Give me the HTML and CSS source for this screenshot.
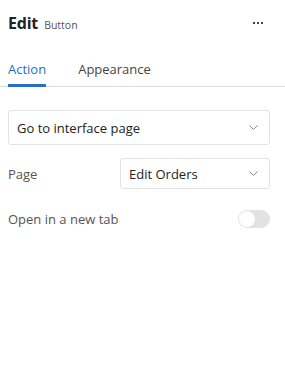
FILE: index.html
```html
<!DOCTYPE html>
<html>
<head>
<meta charset="utf-8">
<link rel="stylesheet" href="styles.css">
</head>
<body>
<div class="panel">
  <header class="head">
    <div class="title"><span class="t-main">Edit</span><span class="t-sub">Button</span></div>
    <button class="more" aria-label="More">
      <svg width="10" height="3" viewBox="0 0 10 3"><rect x="0" y="0" width="2" height="2" fill="#444"/><rect x="4" y="0" width="2" height="2" fill="#444"/><rect x="8" y="0" width="2" height="2" fill="#444"/></svg>
    </button>
  </header>
  <nav class="tabs">
    <div class="tab active">Action</div>
    <div class="tab">Appearance</div>
  </nav>
  <div class="body">
    <div class="select wide">
      <span>Go to interface page</span>
      <svg class="chev" width="9" height="5" viewBox="0 0 9 5"><path d="M0.5 0.5 L4.5 4.5 L8.5 0.5" fill="none" stroke="#888" stroke-width="1"/></svg>
    </div>
    <div class="row">
      <label class="lbl">Page</label>
      <div class="select narrow">
        <span>Edit Orders</span>
        <svg class="chev" width="9" height="5" viewBox="0 0 9 5"><path d="M0.5 0.5 L4.5 4.5 L8.5 0.5" fill="none" stroke="#888" stroke-width="1"/></svg>
      </div>
    </div>
    <div class="row toggle-row">
      <label class="lbl">Open in a new tab</label>
      <div class="toggle"><div class="knob"></div></div>
    </div>
  </div>
</div>
</body>
</html>
```
FILE: styles.css
```css
html, body {
  margin: 0;
  padding: 0;
  background: #fff;
}
body {
  font-family: "Open Sans", "Noto Sans", sans-serif;
  color: #333;
  width: 285px;
}
.head {
  display: flex;
  align-items: center;
  justify-content: space-between;
  padding: 11px 22px 0 8px;
  height: 24px;
}
.title {
  display: flex;
  align-items: baseline;
  gap: 6px;
}
.t-main {
  font-size: 16px;
  font-weight: 700;
  color: #222;
  letter-spacing: -0.2px;
}
.t-sub {
  font-size: 10.5px;
  color: #555;
}
.more {
  border: 0;
  background: none;
  padding: 0;
  display: flex;
  align-items: center;
}
.tabs {
  display: flex;
  gap: 32px;
  margin-top: 25px;
  padding-left: 8px;
  border-bottom: 1px solid #ddd;
}
.tab {
  font-size: 13px;
  color: #444;
  padding-bottom: 6px;
  border-bottom: 3px solid transparent;
  margin-bottom: -1px;
}
.tab.active {
  color: #1f6fc5;
  border-bottom-color: #2a6fc6;
}
.body {
  padding: 23px 15px 0 8px;
  display: flex;
  flex-direction: column;
}
.select {
  display: flex;
  align-items: center;
  justify-content: space-between;
  border: 1px solid #e3e3e3;
  border-radius: 3px;
  box-sizing: border-box;
  font-size: 13px;
  color: #222;
  padding: 0 11px 0 8px;
}
.select.wide {
  height: 35px;
}
.select.narrow {
  width: 150px;
  height: 31px;
}
.row {
  display: flex;
  align-items: center;
  justify-content: space-between;
  margin-top: 13px;
}
.lbl {
  font-size: 13px;
  color: #555;
}
.toggle-row {
  margin-top: 21px;
}
.toggle {
  width: 32px;
  height: 18px;
  border-radius: 9px;
  background: #e2e2e2;
  display: flex;
  align-items: center;
  padding: 0 1px;
  box-sizing: border-box;
}
.knob {
  width: 16px;
  height: 16px;
  border-radius: 50%;
  background: #fff;
}
```
